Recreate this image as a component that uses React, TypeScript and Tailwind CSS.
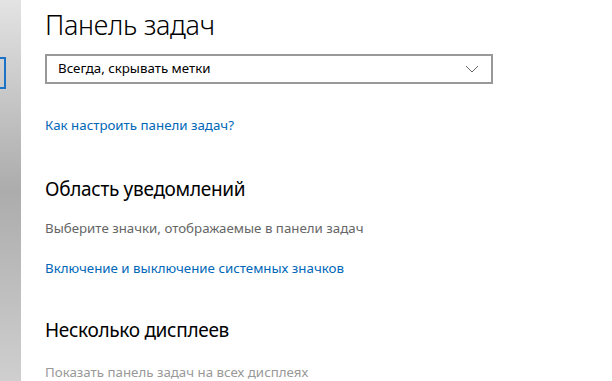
import React from 'react';

const font = { fontFamily: '"Noto Sans", "Open Sans", sans-serif' };

const App: React.FC = () => {
  return (
    <div className="flex w-[612px] h-[381px] overflow-hidden bg-white" style={font}>
      {/* left nav strip, blurred */}
      <div className="relative w-[21px] h-full shrink-0 bg-gradient-to-b from-[#e3e3e3] via-[#acacac] to-[#cfcfcf]">
        <div className="absolute left-[-4px] top-[57px] w-[10px] h-[32px] border-2 border-[#1a73c8]" />
      </div>

      <div className="flex-1 pl-[24px] pt-[6px]">
        <h1 className="text-[27px] leading-[38px] tracking-[-0.3px] font-light text-black">Панель задач</h1>

        <div className="mt-[10px] w-[448px] h-[30px] border-2 border-[#999] flex items-center justify-between pl-[11px] pr-[12px]">
          <span className="text-[13.3px] text-black">Всегда, скрывать метки</span>
          <svg width="14" height="8" viewBox="0 0 14 8" fill="none">
            <path d="M1 1l6 6 6-6" stroke="#666" strokeWidth="1" />
          </svg>
        </div>

        <a className="block mt-[31px] text-[13.3px] leading-[20px] text-[#0067b8]">Как настроить панели задач?</a>

        <h2 className="mt-[40px] text-[19px] leading-[28px] tracking-[-0.3px] text-black">Область уведомлений</h2>

        <p className="mt-[15px] text-[13.3px] leading-[20px] text-[#666]">Выберите значки, отображаемые в панели задач</p>

        <a className="block mt-[20px] text-[13.3px] leading-[20px] text-[#0067b8]">Включение и выключение системных значков</a>

        <h2 className="mt-[38px] text-[19px] leading-[28px] tracking-[-0.3px] text-black">Несколько дисплеев</h2>

        <p className="mt-[18px] text-[13.3px] leading-[20px] text-[#999]">Показать панель задач на всех дисплеях</p>
      </div>
    </div>
  );
};

export default App;
